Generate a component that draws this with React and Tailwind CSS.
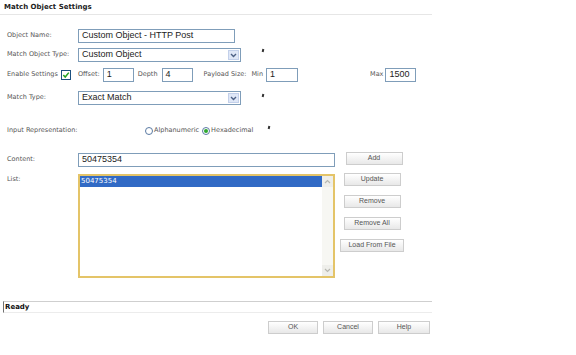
import React from 'react';

const labelCls = "w-[78px] shrink-0 pl-[7px] text-[6.5px] text-[#555] font-['DejaVu_Sans',sans-serif]";
const inputCls = "h-[14px] border border-[#7f9db9] bg-white flex items-center pl-[3px] text-[9px] text-[#222] font-['Liberation_Sans',Arial,sans-serif]";
const btnCls = "h-[13px] flex items-center justify-center border border-[#cdcdcd] bg-gradient-to-b from-white to-[#e8e8e8] text-[7px] text-[#555] font-['Liberation_Sans',Arial,sans-serif]";

const Tick = () => <span className="block w-[2px] h-[3px] bg-[#333] rotate-12" />;

const Select = ({ value }) => (
  <div className={`${inputCls} w-[163px] justify-between pr-[1px]`}>
    <span>{value}</span>
    <span className="w-[11px] h-[10px] bg-[#dfe7f7] border border-[#c3d0ea] flex items-center justify-center">
      <svg width="7" height="5" viewBox="0 0 7 5">
        <path d="M1 1 L3.5 3.5 L6 1" fill="none" stroke="#4d6185" strokeWidth="1.4" />
      </svg>
    </span>
  </div>
);

const Radio = ({ checked }) => (
  <span className="w-[8px] h-[8px] rounded-full border border-[#5a7aa3] bg-white flex items-center justify-center">
    {checked && <span className="w-[4px] h-[4px] rounded-full bg-[#2fa82f]" />}
  </span>
);

const App = () => {
  return (
    <div className="w-[576px] h-[355px] bg-white overflow-hidden flex flex-col">
      <div className="w-[432px] h-[15px] border-b border-[#e6e6e6] pl-[4px] pt-[3px] text-[7px] leading-[9px] font-bold text-[#222] font-['DejaVu_Sans',sans-serif]">
        Match Object Settings
      </div>

      <div className="mt-[14px] flex items-center">
        <span className={labelCls}>Object Name:</span>
        <div className={`${inputCls} w-[157px]`}>Custom Object - HTTP Post</div>
      </div>

      <div className="mt-[5px] flex items-start">
        <span className={`${labelCls} self-center`}>Match Object Type:</span>
        <Select value="Custom Object" />
        <span className="ml-[21px] mt-[1px]"><Tick /></span>
      </div>

      <div className="mt-[6px] flex items-center text-[6.5px] text-[#555] font-['DejaVu_Sans',sans-serif]">
        <span className="w-[61px] shrink-0 pl-[7px]">Enable Settings</span>
        <span className="w-[10px] h-[10px] border border-[#1c5180] bg-white flex items-center justify-center">
          <svg width="8" height="8" viewBox="0 0 8 8">
            <path d="M1.3 4 L3.2 6 L6.8 1.6" fill="none" stroke="#21a121" strokeWidth="1.5" />
          </svg>
        </span>
        <span className="ml-[7px]">Offset:</span>
        <div className={`${inputCls} w-[31px] ml-[3px]`}>1</div>
        <span className="ml-[4px]">Depth</span>
        <div className={`${inputCls} w-[31px] ml-[4px]`}>4</div>
        <span className="ml-[11px]">Payload Size:</span>
        <span className="ml-[5px]">Min</span>
        <div className={`${inputCls} w-[32px] ml-[3px]`}>1</div>
        <span className="ml-[72px]">Max</span>
        <div className={`${inputCls} w-[31px] ml-[2px]`}>1500</div>
      </div>

      <div className="mt-[9px] flex items-start">
        <span className={`${labelCls} self-center`}>Match Type:</span>
        <Select value="Exact Match" />
        <span className="ml-[21px] mt-[3px]"><Tick /></span>
      </div>

      <div className="mt-[21px] flex items-center text-[6.5px] text-[#555] font-['DejaVu_Sans',sans-serif]">
        <span className="w-[145px] shrink-0 pl-[7px]">Input Representation:</span>
        <Radio />
        <span className="ml-[1px]">Alphanumeric</span>
        <span className="ml-[3px]"><Radio checked /></span>
        <span className="ml-[1px]">Hexadecimal</span>
        <span className="ml-[15px] -mt-[6px]"><Tick /></span>
      </div>

      <div className="mt-[16px] flex items-start">
        <div className="w-[335px] flex flex-col">
          <div className="mt-[1px] flex items-center">
            <span className={labelCls}>Content:</span>
            <div className={`${inputCls} w-[257px] text-[7px] font-['DejaVu_Sans',sans-serif]`}>50475354</div>
          </div>
          <div className="mt-[7px] flex items-start">
            <span className={`${labelCls} mt-[1px]`}>List:</span>
            <div className="w-[257px] h-[104px] border-2 border-[#e4c468] flex">
              <div className="flex-1">
                <div className="h-[11px] bg-[#316ac5] text-white text-[7px] leading-[11px] pl-[1px] font-['DejaVu_Sans',sans-serif]">50475354</div>
              </div>
              <div className="w-[11px] bg-[#f7f7f3] flex flex-col justify-between">
                <div className="h-[11px] bg-[#eeeeea] flex items-center justify-center">
                  <svg width="7" height="5" viewBox="0 0 7 5"><path d="M1 4 L3.5 1.5 L6 4" fill="none" stroke="#b8b8b0" strokeWidth="1.2" /></svg>
                </div>
                <div className="h-[11px] bg-[#eeeeea] flex items-center justify-center">
                  <svg width="7" height="5" viewBox="0 0 7 5"><path d="M1 1 L3.5 3.5 L6 1" fill="none" stroke="#b8b8b0" strokeWidth="1.2" /></svg>
                </div>
              </div>
            </div>
          </div>
        </div>
        <div className="ml-[5px] w-[64px] flex flex-col items-center">
          <div className={`${btnCls} w-[57px] ml-[4px]`}>Add</div>
          <div className={`${btnCls} w-[57px] mt-[8px]`}>Update</div>
          <div className={`${btnCls} w-[57px] mt-[9px]`}>Remove</div>
          <div className={`${btnCls} w-[57px] mt-[9px]`}>Remove All</div>
          <div className={`${btnCls} w-[64px] mt-[9px]`}>Load From File</div>
        </div>
      </div>

      <div className="mt-[23px] ml-[3px] w-[429px] h-[12px] border-t border-[#cfcfcf] border-l border-l-[#707070] border-b border-b-[#ececec] pl-[1px] text-[7px] leading-[10px] font-bold text-[#111] font-['DejaVu_Sans',sans-serif]">
        Ready
      </div>

      <div className="mt-[8px] w-[430px] flex justify-end gap-[5px]">
        <div className={`${btnCls} w-[50px]`}>OK</div>
        <div className={`${btnCls} w-[50px]`}>Cancel</div>
        <div className={`${btnCls} w-[52px]`}>Help</div>
      </div>
    </div>
  );
};

export default App;
